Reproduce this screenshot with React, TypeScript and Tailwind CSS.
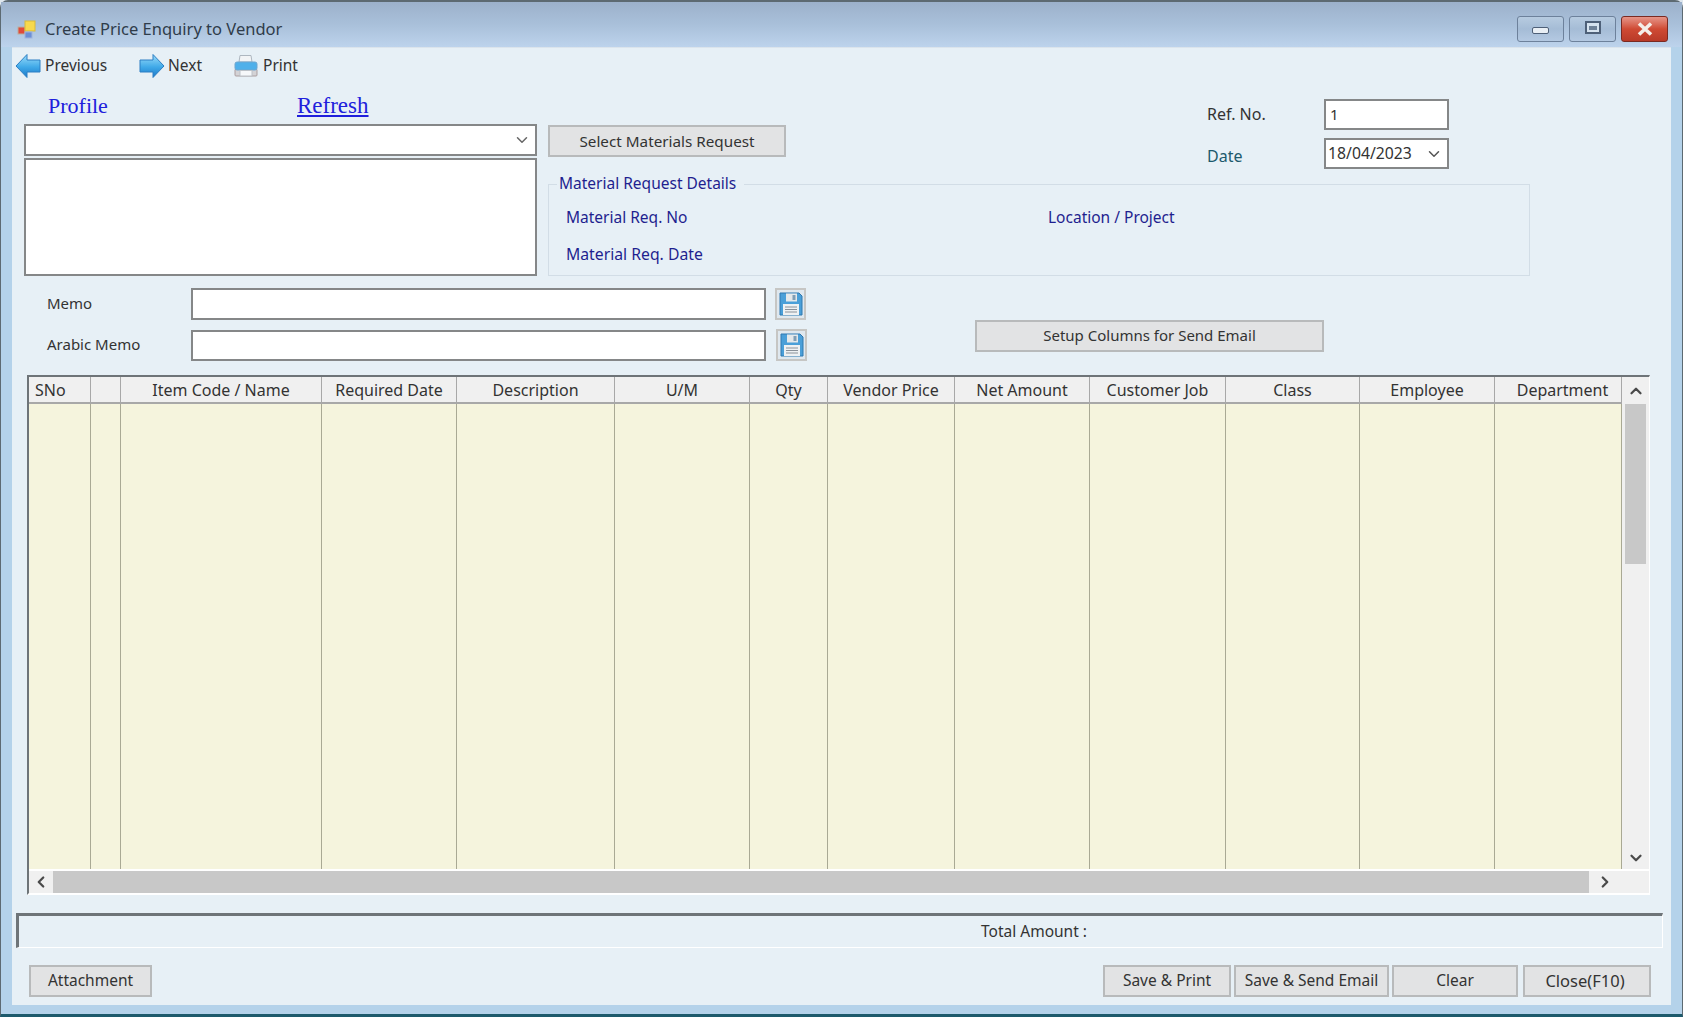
import React from 'react';
import { ChevronDown, ChevronLeft, ChevronRight, ChevronUp } from 'lucide-react';

const columns = [
  { label: 'SNo', width: 'w-[62px]', align: 'justify-start pl-[6px]' },
  { label: '', width: 'w-[30px]', align: 'justify-center' },
  { label: 'Item Code / Name', width: 'w-[201px]', align: 'justify-center' },
  { label: 'Required Date', width: 'w-[135px]', align: 'justify-center' },
  { label: 'Description', width: 'w-[158px]', align: 'justify-center' },
  { label: 'U/M', width: 'w-[135px]', align: 'justify-center' },
  { label: 'Qty', width: 'w-[78px]', align: 'justify-center' },
  { label: 'Vendor Price', width: 'w-[127px]', align: 'justify-center' },
  { label: 'Net Amount', width: 'w-[135px]', align: 'justify-center' },
  { label: 'Customer Job', width: 'w-[136px]', align: 'justify-center' },
  { label: 'Class', width: 'w-[134px]', align: 'justify-center' },
  { label: 'Employee', width: 'w-[135px]', align: 'justify-center' },
  { label: 'Department', width: 'w-[127px]', align: 'justify-center pl-[9px]' },
];

const AppIcon = () => (
  <svg width="20" height="20" viewBox="0 0 20 20">
    <rect x="1" y="7" width="7" height="7" fill="#e04a3a" stroke="#b9b0a0" />
    <rect x="8" y="1" width="10" height="10" fill="#f7d94c" stroke="#d8b93a" />
    <rect x="8" y="12" width="7" height="6" fill="#6c8fd6" stroke="#9fb4dd" />
  </svg>
);

const ArrowLeft = () => (
  <svg width="26" height="26" viewBox="0 0 26 26">
    <defs>
      <linearGradient id="arrowLeft" x1="0" y1="0" x2="0" y2="1">
        <stop offset="0" stopColor="#9adcfa" />
        <stop offset="0.55" stopColor="#3fa9e8" />
        <stop offset="1" stopColor="#1c78c8" />
      </linearGradient>
    </defs>
    <path d="M1 13 L12 1.5 L12 7 L25 7 L25 19 L12 19 L12 24.5 Z" fill="url(#arrowLeft)" stroke="#2c7fc4" />
  </svg>
);

const ArrowRight = () => (
  <svg width="26" height="26" viewBox="0 0 26 26">
    <defs>
      <linearGradient id="arrowRight" x1="0" y1="0" x2="0" y2="1">
        <stop offset="0" stopColor="#9adcfa" />
        <stop offset="0.55" stopColor="#3fa9e8" />
        <stop offset="1" stopColor="#1c78c8" />
      </linearGradient>
    </defs>
    <path d="M25 13 L14 1.5 L14 7 L1 7 L1 19 L14 19 L14 24.5 Z" fill="url(#arrowRight)" stroke="#2c7fc4" />
  </svg>
);

const Printer = () => (
  <svg width="24" height="24" viewBox="0 0 24 24">
    <path d="M6 1.5 H17 L18 8 H5 Z" fill="#f2f4f6" stroke="#aeb7c0" />
    <rect x="1" y="15" width="22" height="7" rx="1" fill="#d4d3d6" stroke="#ab9ea0" />
    <rect x="1" y="8" width="22" height="8" rx="2" fill="#4fb0ea" stroke="#6ea6cf" />
    <rect x="6" y="16.5" width="12" height="5.5" fill="#f6f8fa" stroke="#bcc2c8" />
  </svg>
);

const Floppy = () => (
  <svg width="24" height="24" viewBox="0 0 24 24">
    <path d="M1 1 H20 L23 4 V23 H1 Z" fill="#4a9fd8" stroke="#2f78b0" />
    <rect x="7" y="1.5" width="11" height="8" fill="#e4e8ea" />
    <rect x="13.5" y="3" width="3" height="5" fill="#7f9db5" />
    <rect x="4" y="12" width="16" height="11" fill="#eef1f3" />
    <path d="M6 15 H18 M6 17.5 H18 M6 20 H18" stroke="#8a9199" />
  </svg>
);

const FloppyButton = () => (
  <div className="w-[31px] h-[32px] flex items-center justify-center border-2 border-[#c6c6c4] bg-[#dfe8ef]">
    <Floppy />
  </div>
);

const Field = ({ className }: { className: string }) => (
  <div className={`bg-white border-2 border-[#858788] ${className}`} />
);

const FormButton = ({ label, className }: { label: string; className: string }) => (
  <button className={`h-[32px] bg-[#e2e3e4] border-2 border-[#b8babb] text-[#333] ${className}`}>{label}</button>
);

const CaptionButton = ({ className, children }: { className: string; children: React.ReactNode }) => (
  <div className={`h-[26px] w-[47px] flex items-center justify-center rounded-[3px] border ${className}`}>{children}</div>
);

export default function App() {
  return (
    <div className="w-[1683px] h-[1017px] overflow-hidden bg-[#dfe7ee] font-['Noto_Sans',sans-serif] text-[15px] text-[#333]">
      <div className="h-full flex flex-col rounded-t-[8px] border-t-2 border-x border-[#5d6a72] border-b-[3px] border-b-[#1d5a6c] bg-[#b4d2ea]">
        <div className="h-[45px] flex items-center justify-between pl-[16px] pr-[3px] bg-gradient-to-b from-[#9cb1cb] via-[#a9c0da] to-[#bdd3ec]">
          <div className="flex items-center gap-[8px] mt-[10px]">
            <AppIcon />
            <span className="text-[16.5px] text-[#2f3c4a]">Create Price Enquiry to Vendor</span>
          </div>
          <div className="flex gap-[5px] mt-[9px] mr-[11px]">
            <CaptionButton className="border-[#6d819b] bg-gradient-to-b from-[#b7cbe0] via-[#a5bcd6] to-[#b4c9e2]">
              <div className="w-[17px] h-[7px] rounded-[2px] bg-[#e9eff5] border border-[#4e6078] mt-[3px]" />
            </CaptionButton>
            <CaptionButton className="border-[#6d819b] bg-gradient-to-b from-[#b7cbe0] via-[#a5bcd6] to-[#b4c9e2]">
              <div className="w-[16px] h-[13px] flex items-center justify-center border-2 border-[#4e6078] bg-[#d6e3ef] mb-[3px]">
                <div className="w-[8px] h-[4px] bg-[#6f8298]" />
              </div>
            </CaptionButton>
            <CaptionButton className="border-[#7a2a22] bg-gradient-to-b from-[#e59488] via-[#cf4a34] to-[#b93a28]">
              <svg width="18" height="14" viewBox="0 0 18 14">
                <path d="M3 1.5 L15 12.5 M15 1.5 L3 12.5" stroke="#f4efe9" strokeWidth="3.6" />
              </svg>
            </CaptionButton>
          </div>
        </div>
        <div className="flex flex-1 px-[11px] pb-[9px]">
          <div className="flex-1 bg-[#e7f0f6] border-t border-[#dbe4ec] flex flex-col">
            <div className="h-[35px] flex items-center pl-[3px] text-[15.5px]">
              <div className="flex items-center gap-[4px] w-[124px]">
                <ArrowLeft />
                <span>Previous</span>
              </div>
              <div className="flex items-center gap-[3px] w-[95px]">
                <ArrowRight />
                <span>Next</span>
              </div>
              <div className="flex items-center gap-[5px]">
                <Printer />
                <span>Print</span>
              </div>
            </div>

            <div className="flex pl-[12px]">
              <div className="w-[513px] flex flex-col">
                <div className="h-[41px] pt-[3px] flex items-center font-['Liberation_Serif',serif] text-[#2020dc]">
                  <span className="ml-[24px] w-[249px] text-[22px]">Profile</span>
                  <span className="text-[23px] underline mt-[2px]">Refresh</span>
                </div>
                <div className="h-[32px] bg-white border-2 border-[#858788] flex items-center justify-end pr-[4px]">
                  <ChevronDown size={18} color="#666" />
                </div>
                <Field className="h-[118px] mt-[2px]" />
              </div>

              <div className="w-[982px] ml-[11px] flex flex-col">
                <div className="flex pt-[16px]">
                  <FormButton label="Select Materials Request" className="w-[238px] mt-[26px] text-[15.25px]" />
                  <div className="ml-[421px] flex flex-col gap-[8px] text-[16px]">
                    <div className="flex items-center h-[31px]">
                      <span className="w-[117px] mb-[2px]">Ref. No.</span>
                      <input readOnly value="1" className="w-[125px] h-full bg-white border-2 border-[#858788] px-[4px] pb-[2px] text-[15px] outline-none" />
                    </div>
                    <div className="flex items-center h-[31px]">
                      <span className="w-[117px] mt-[4px] text-[#1d5a6c]">Date</span>
                      <div className="w-[125px] h-full bg-white border-2 border-[#858788] pl-[2px] pr-[4px] flex items-center justify-between text-[15.75px]">
                        <span>18/04/2023</span>
                        <ChevronDown size={18} color="#555" />
                      </div>
                    </div>
                  </div>
                </div>
                <fieldset className="h-[103px] mt-[4px] border border-[#d2dde6] text-[#1f1f8f] text-[15.5px] px-[17px]">
                  <legend className="ml-[-9px] -translate-y-[1px] px-[2px] pr-[8px] bg-[#e7f0f6]">Material Request Details</legend>
                  <div className="flex mt-[10px]">
                    <span className="w-[482px]">Material Req. No</span>
                    <span>Location / Project</span>
                  </div>
                  <div className="mt-[13px] text-[15.75px]">Material Req. Date</div>
                </fieldset>
              </div>
            </div>

            <div className="flex mt-[12px]">
              <div className="flex flex-col gap-[9px]">
                <div className="flex items-center pl-[35px]">
                  <span className="w-[144px] mb-[2px]">Memo</span>
                  <Field className="w-[575px] h-[32px]" />
                  <div className="ml-[9px]">
                    <FloppyButton />
                  </div>
                </div>
                <div className="flex items-center pl-[35px]">
                  <span className="w-[144px] mb-[2px]">Arabic Memo</span>
                  <Field className="w-[575px] h-[31px]" />
                  <div className="ml-[10px]">
                    <FloppyButton />
                  </div>
                </div>
              </div>
              <FormButton label="Setup Columns for Send Email" className="w-[349px] ml-[168px] mt-[32px] pb-[2px]" />
            </div>

            <div className="ml-[15px] mt-[14px] w-[1623px] h-[520px] flex flex-col border-t-2 border-l-2 border-[#6e7478] border-r border-r-white border-b-2 border-b-white bg-[#f0f0f0]">
              <div className="flex flex-1 min-h-0">
                <div className="flex flex-1 flex-col">
                  <div className="flex h-[27px] border-b-2 border-[#a8a8a8] bg-[#f0f0f0] text-[16px]">
                    {columns.map((c, i) => (
                      <div key={i} className={`flex items-center shrink-0 border-r border-[#a8a8a8] ${c.width} ${c.align}`}>
                        {c.label}
                      </div>
                    ))}
                  </div>
                  <div className="flex flex-1 bg-[#f5f4dd]">
                    {columns.map((c, i) => (
                      <div key={i} className={`shrink-0 border-r border-[#a9a994] ${c.width}`} />
                    ))}
                  </div>
                </div>
                <div className="w-[28px] flex flex-col items-center">
                  <div className="h-[27px] flex items-center justify-center">
                    <ChevronUp size={18} strokeWidth={3} color="#4a4a4a" />
                  </div>
                  <div className="w-[21px] h-[160px] bg-[#c8c8c8]" />
                  <div className="flex-1 flex items-end justify-center pb-[2px]">
                    <ChevronDown size={18} strokeWidth={3} color="#4a4a4a" />
                  </div>
                </div>
              </div>
              <div className="h-[24px] flex items-center border-t-2 border-white">
                <div className="w-[24px] flex justify-center">
                  <ChevronLeft size={18} strokeWidth={3} color="#4a4a4a" />
                </div>
                <div className="w-[1536px] h-[22px] bg-[#c8c8c8]" />
                <div className="w-[32px] flex justify-center">
                  <ChevronRight size={18} strokeWidth={3} color="#4a4a4a" />
                </div>
              </div>
            </div>

            <div className="ml-[4px] mt-[18px] w-[1647px] h-[35px] flex items-center border-t-[3px] border-l-[3px] border-[#6e7478] border-r border-r-white border-b border-b-white pl-[962px] text-[15.5px]">
              Total Amount :
            </div>

            <div className="flex justify-between mt-[17px] pl-[17px] pr-[20px] text-[15.5px]">
              <FormButton label="Attachment" className="w-[123px]" />
              <div className="flex gap-[3px]">
                <FormButton label="Save & Print" className="w-[128px]" />
                <FormButton label="Save & Send Email" className="w-[155px]" />
                <FormButton label="Clear" className="w-[126px] mr-[2px]" />
                <FormButton label="Close(F10)" className="w-[128px] pr-[4px] text-[16.5px]" />
              </div>
            </div>
          </div>
        </div>
      </div>
    </div>
  );
}
